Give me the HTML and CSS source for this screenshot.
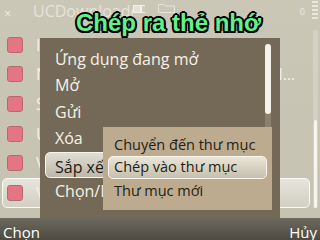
FILE: index.html
```html
<!DOCTYPE html>
<html lang="vi">
<head>
<meta charset="utf-8">
<link rel="stylesheet" href="styles.css">
</head>
<body>
<div class="screen">
  <div class="status">
    <span class="close">×</span>
    <span class="title">UCDownloader</span>
    <span class="ind-icons">
      <svg class="doc" width="14" height="8" viewBox="0 0 14 8"><rect x="0" y="0" width="12" height="8" fill="#f2f0ea"/><rect x="9" y="1" width="3" height="6" fill="#cfccbf"/><path d="M1 2h6M1 4h6M1 6h6" stroke="#cfccbf" stroke-width="0.8"/></svg>
      <svg class="folder" width="17" height="9" viewBox="0 0 17 9"><path d="M0.5 8.5V0.5H6L7.5 2H16.5V8.5Z" fill="none" stroke="#e6e3d8" stroke-width="1"/></svg>
    </span>
    <span class="spacer"></span>
    <span class="num">0</span>
    <span class="bars"><i></i><i></i><i></i><i></i><i></i></span>
  </div>

  <div class="content">
    <ul class="files">
      <li class="file"><span class="check"></span><span class="fname">Imgs</span></li>
      <li class="file"><span class="check"></span><span class="fname">Nhạc chuông NNNNNNNNNNNNNNNN</span></li>
      <li class="file"><span class="check"></span><span class="fname">Setup.sis</span></li>
      <li class="file"><span class="check"></span><span class="fname">UCWeb.jar</span></li>
      <li class="file"><span class="check"></span><span class="fname">Video.mp4</span></li>
      <li class="file sel"><span class="check"></span><span class="fname">Vietnam.zip</span></li>
    </ul>
    <div class="vscroll"><div class="vthumb"></div></div>
  </div>

  <div class="softkeys"><span>Chọn</span><span>Hủy</span></div>

  <div class="menu">
    <div class="menu-item">Ứng dụng đang mở</div>
    <div class="menu-item">Mở</div>
    <div class="menu-item">Gửi</div>
    <div class="menu-item">Xóa</div>
    <div class="menu-item sel">Sắp xếp</div>
    <div class="menu-item">Chọn/Bỏ chọn</div>
    <div class="mscroll"><div class="mthumb"></div></div>
  </div>

  <div class="submenu">
    <div class="sub-item">Chuyển đến thư mục</div>
    <div class="sub-item sel">Chép vào thư mục</div>
    <div class="sub-item">Thư mục mới</div>
  </div>

  <div class="caption">Chép ra thẻ nhớ</div>
</div>
</body>
</html>
```

FILE: styles.css
```css
* { box-sizing: border-box; margin: 0; padding: 0; }
html, body { width: 320px; height: 240px; overflow: hidden; }
body { font-family: "Open Sans", "Noto Sans", sans-serif; background: #c8c5b4; }

.screen {
  position: relative;
  width: 320px;
  height: 240px;
  display: flex;
  flex-direction: column;
  background: linear-gradient(#cac7b7, #c5c2b1);
  overflow: hidden;
}

/* status bar */
.status { height: 30px; display: flex; align-items: flex-start; }
.close { width: 33px; padding-left: 4px; font-size: 13px; line-height: 13px; margin-top: 7px; color: #eeebe2; }
.title { width: 100px; font-size: 16px; line-height: 22px; color: #e6e3d7; white-space: nowrap; overflow: hidden; }
.ind-icons { display: flex; gap: 11px; margin-top: 4px; }
.doc { margin-top: 1px; }
.spacer { flex: 1; }
.num { font-size: 9px; line-height: 9px; margin-top: 7px; color: #eeebe2; }
.bars { display: flex; flex-direction: column; gap: 2px; width: 6px; margin: 1px 2px 0 7px; }
.bars i { display: block; height: 2px; background: #e9e6dc; }

/* file list */
.content { flex: 1; display: flex; }
.files { flex: 1; list-style: none; min-width: 0; }
.file {
  height: 29.6px;
  display: flex;
  align-items: center;
  gap: 13px;
  margin: 0 2px;
  padding: 0 6px 0 4px;
  border: 1px solid transparent;
  border-radius: 5px;
}
.check { flex: none; width: 16px; height: 16px; background: #e47684; border: 1px solid #b8686f; border-radius: 3px; }
.fname { flex: 1; min-width: 0; font-size: 16px; color: #f3f1ea; white-space: nowrap; overflow: hidden; text-overflow: ellipsis; }
.file.sel { border: 1.5px solid #fbfaf5; background: linear-gradient(#e6e4db, #d2cfc4); }

.vscroll { width: 5px; margin: 0 2px 10px 1px; background: #d4d1c4; border-radius: 2px; display: flex; flex-direction: column; }
.vthumb { flex: 1; margin: 90px 1px 0; background: #f7f5ef; border-radius: 2px; }

/* soft keys */
.softkeys {
  height: 22px;
  padding: 4px 3px 0;
  display: flex;
  justify-content: space-between;
  font-size: 15px;
  line-height: 20px;
  color: #ffffff;
  background: linear-gradient(#6d695e, #4d4a41);
}

/* options menu */
.menu {
  position: absolute;
  left: 40px;
  top: 38px;
  width: 240px;
  height: 180px;
  padding-top: 7.5px;
  background: #746957;
}
.menu-item { height: 26.5px; line-height: 26.5px; padding-left: 15px; font-size: 16px; color: #f6f2e8; white-space: nowrap; }
.menu-item.sel {
  margin: 0 20px 0 5px;
  padding-left: 9px;
  line-height: 28px;
  border: 1px solid #f7f5ee;
  border-radius: 5px;
  color: #1f1b14;
  background: linear-gradient(#e0ddd3, #bcb7a9);
}
.mscroll { position: absolute; left: 225px; top: 6px; width: 6px; height: 89px; background: #8c806d; border-radius: 3px; }
.mthumb { height: 70px; background: #f5f2ea; border-radius: 3px; }

/* submenu */
.submenu {
  position: absolute;
  left: 103px;
  top: 127px;
  width: 169px;
  height: 83px;
  padding-top: 6px;
  background: #bdab90;
}
.sub-item { height: 23px; line-height: 23px; padding-left: 11px; font-size: 14.5px; color: #231e15; white-space: nowrap; }
.sub-item.sel {
  margin: 0 5px;
  padding-left: 5px;
  line-height: 20px;
  border: 1.5px solid #faf8f1;
  border-radius: 5px;
  background: linear-gradient(#ebe5d7, #c6bfae);
}

/* caption overlay */
.caption {
  position: absolute;
  left: 76px;
  top: 11px;
  font-family: "Liberation Sans", Arial, sans-serif;
  font-weight: bold;
  font-size: 24px;
  line-height: 24px;
  color: #63ef8a;
  white-space: nowrap;
  text-shadow:
    -2px 0 0 #000, 2px 0 0 #000, 0 -2px 0 #000, 0 2px 0 #000,
    -1.5px -1.5px 0 #000, 1.5px -1.5px 0 #000, -1.5px 1.5px 0 #000, 1.5px 1.5px 0 #000;
}
```
